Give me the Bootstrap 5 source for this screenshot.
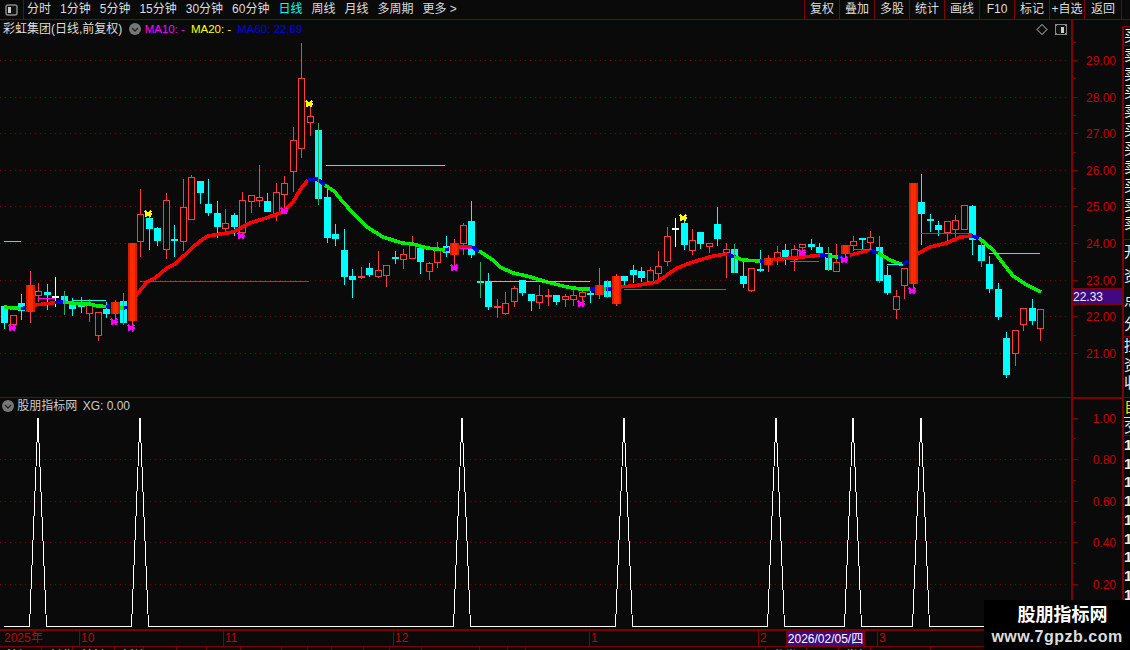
<!DOCTYPE html>
<html lang="zh-CN">
<head>
<meta charset="utf-8">
<title>彩虹集团 日线</title>
<link rel="stylesheet" href="https://cdn.jsdelivr.net/npm/bootstrap@5.3.0/dist/css/bootstrap.min.css">
<style>
html,body{height:100%;margin:0;background:#0a0a0a;overflow:hidden}
body{font-family:"Liberation Sans","Noto Sans CJK SC",sans-serif;font-size:12px;line-height:1;color:#ddd}
.term{width:1130px;height:650px;position:relative;background:#0a0a0a;overflow:hidden}
.tbar{height:20px;border-bottom:1px solid #800000;flex:none}
.tog-cell{width:24px;border-right:1px solid #800000}
.tog{display:block}
.tnav{gap:9px;padding-left:3px}
.tnav span{line-height:19px;white-space:nowrap}
.tnav .on{color:#00ffff}
.tbtn{width:35px;border-left:1px solid #800000;line-height:19px;text-align:center;white-space:nowrap}
.tbtn.last{width:38px;border-right:1px solid #800000}
.tpad{width:8px}
.mid{height:630px;flex:none}
.charts{width:1122px;flex:none}
.pan1{height:378px;flex:none;border-bottom:1px solid #800000}
.pan2{height:233px;flex:none;border-bottom:2px solid #800000}
.plot{display:block;shape-rendering:crispEdges}
.lg{position:absolute;left:3px;top:2px;line-height:14px;white-space:nowrap;color:#ddd}
.lg2{left:2px;top:1px;color:#ccc}
.lg svg{vertical-align:-2px}
.chev{margin-left:3px}
.xg{margin-left:2px}
.ma1{color:#ff00ff}.ma2{color:#ffff00}.ma3{color:#0000e6}
.ma{font-size:11.5px;margin-left:6px}
.dax{height:16px;flex:none;border-bottom:1px solid #800000}
.dcell{border-left:1px solid #800000;color:#c80000;padding-left:1px;line-height:15px;white-space:nowrap;flex:none}
.dcell.first{border-left:0;padding-left:4px}
.ddate{position:absolute;left:786px;top:0;width:79px;height:16px;background:#3f0a80;border:1px solid #800000;color:#fff;font-size:12px;line-height:14px;text-align:center;white-space:nowrap}
.tabs{height:3px;overflow:hidden;flex:none}
.tcell{border-right:1px solid #800000;flex:none;line-height:14px;padding:2px 0 0 7px;white-space:nowrap;overflow:hidden;color:#ddd}
.tcell.cy{color:#00ffff}
.strip{width:8px;flex:none;margin-top:6px;border-left:2px solid #800000;border-top:1px solid #800000;overflow:hidden;color:#eee;font-size:15px;line-height:18.7px}
.sec{border-bottom:1px solid #800000;overflow:hidden;white-space:nowrap}
.s1{height:19px}.s2{height:194px}.s3{height:97px}.s4{height:61px}.s5{height:20px;color:#e6e600;border-bottom:1px solid #ddd}.s6{height:18px;border-bottom:1px solid #800000}
.s3 div{line-height:24px}
.one{font-weight:700}
.wm{position:absolute;right:0;bottom:0;width:146px;height:50px;background:#000;color:#fff;font-weight:700;text-align:center}
.wm1{font-size:18px;line-height:18px;padding:4px 0 0 11px;font-family:"Noto Sans CJK SC",sans-serif}
.wm2{font-size:16px;line-height:16px;padding-top:7px;letter-spacing:.5px;color:#ddd}
</style>
</head>
<body>
<div class="term d-flex flex-column">
  <div class="tbar d-flex">
    <div class="tog-cell d-flex align-items-center justify-content-center">
      <svg class="tog" width="13" height="12" viewBox="0 0 13 12"><rect x="1" y="1" width="11" height="10" rx="2" fill="#111" stroke="#888" stroke-width="1.5"/><rect x="3" y="3" width="3" height="6" fill="#ccc"/></svg>
    </div>
    <div class="tnav d-flex flex-grow-1">
      <span>分时</span><span>1分钟</span><span>5分钟</span><span>15分钟</span><span>30分钟</span><span>60分钟</span><span class="on">日线</span><span>周线</span><span>月线</span><span>多周期</span><span>更多 &gt;</span>
    </div>
    <div class="d-flex">
      <div class="tbtn">复权</div><div class="tbtn">叠加</div><div class="tbtn">多股</div><div class="tbtn">统计</div><div class="tbtn">画线</div><div class="tbtn">F10</div><div class="tbtn">标记</div><div class="tbtn">+自选</div><div class="tbtn last">返回</div>
    </div>
    <div class="tpad"></div>
  </div>
  <div class="mid d-flex">
    <div class="charts d-flex flex-column">
      <div class="pan1 position-relative">
        <svg class="plot" id="main" width="1122" height="377" viewBox="0 20 1122 377"></svg>
        <div class="lg">彩虹集团(日线,前复权) <svg class="chev" width="12" height="12" viewBox="0 0 12 12"><circle cx="6" cy="6" r="6" fill="#777"/><path d="M3 5l3 3 3-3" fill="none" stroke="#222" stroke-width="1.3"/></svg><span class="ma ma1 ms-1">MA10: -</span><span class="ma ma2">MA20: -</span><span class="ma ma3">MA60: 22.69</span></div>
      </div>
      <div class="pan2 position-relative">
        <svg class="plot" id="sub" width="1122" height="231" viewBox="0 398 1122 231"></svg>
        <div class="lg lg2"><svg width="12" height="12" viewBox="0 0 12 12"><circle cx="6" cy="6" r="6" fill="#777"/><path d="M3 5l3 3 3-3" fill="none" stroke="#222" stroke-width="1.3"/></svg> 股朋指标网 <span class="xg">XG: 0.00</span></div>
      </div>
      <div class="dax d-flex position-relative" id="dax"><div class="ddate">2026/02/05/四</div></div>
      <div class="tabs d-flex" id="tabs"></div>
    </div>
    <div class="strip">
      <div class="sec s1">买</div>
      <div class="sec s2">卖<br>卖<br>买<br>卖<br>买<br>买<br>卖<br>买<br>卖<br>卖</div>
      <div class="sec s3"><div>开</div><div>资</div><div>点</div><div>分</div></div>
      <div class="sec s4">控<br>资<br>收</div>
      <div class="sec s5">自</div>
      <div class="sec s6">交</div>
      <div class="one">1<br>1<br>1<br>1<br>1<br>1<br>1<br>1<br>1<br>1<br>1<br>1</div>
    </div>
  </div>
  <div class="wm"><div class="wm1">股朋指标网</div><div class="wm2">www.7gpzb.com</div></div>
</div>
<script src="https://cdn.jsdelivr.net/npm/bootstrap@5.3.0/dist/js/bootstrap.bundle.min.js"></script>
<script>
var C=`c,306,306,323,329;r,315,315,324,328;c,294,303,311,320;f,271,285,312,323;r,283,291,295,301;c,284,292,295,310;w,277,296,296,307;g,291,296,301,315;c,298,305,309,316;c,297,303,307,313;r,299,305,313,321;r,312,312,335,340;c,302,309,314,318;f,300,302,314,325;g,293,301,323,325;f,243,243,321,332;r,189,214,241,256;c,214,218,229,250;c,227,228,241,246;r,193,200,249,258;e,225,239,239,257;r,179,207,241,250;r,175,177,219,219;c,181,181,193,204;c,179,204,213,216;c,201,213,227,238;r,209,223,228,230;c,213,215,227,236;r,192,200,232,234;r,195,195,201,212;r,165,197,200,206;c,193,201,212,212;r,183,192,214,220;r,176,183,194,213;r,127,140,171,191;r,43,78,148,157;r,107,116,122,135;g,123,130,199,205;c,187,197,238,243;c,224,234,239,246;c,229,250,277,285;c,269,276,280,298;d,267,276,276,279;c,263,268,275,277;r,251,270,276,277;r,265,265,275,286;e,251,257,257,264;r,249,254,259,268;r,236,245,258,258;c,248,248,262,274;r,262,263,271,279;r,242,250,262,267;c,236,246,253,257;f,239,243,255,270;r,223,225,243,254;c,201,221,255,258;h,262,281,281,298;c,273,281,307,310;d,299,306,306,318;r,292,303,313,314;r,286,288,301,306;c,280,280,293,296;c,294,294,301,311;r,285,295,302,308;d,289,295,295,306;c,295,295,302,305;r,294,296,299,306;r,290,295,299,305;r,288,292,296,304;e,288,293,293,303;f,268,285,295,299;g,280,281,297,298;f,274,276,304,306;c,276,276,281,286;c,265,270,275,283;c,267,271,278,282;r,267,270,281,281;r,251,266,273,280;r,227,236,261,265;w,218,228,228,247;c,215,223,245,250;r,229,240,250,254;c,232,232,244,249;r,243,243,246,252;c,207,224,239,246;r,243,249,252,277;g,244,249,273,273;c,260,276,284,288;r,268,268,290,291;e,250,269,269,272;f,255,258,265,272;r,246,252,259,264;c,244,250,259,265;r,245,249,259,270;r,244,244,247,255;c,239,244,247,250;c,243,247,253,256;g,247,253,270,271;r,244,262,271,271;f,245,245,254,260;r,236,241,245,250;e,238,238,238,250;r,231,237,242,250;g,236,247,281,283;c,266,275,293,295;r,290,296,309,318;r,268,268,285,298;f,183,183,284,288;c,174,202,214,245;e,214,219,219,232;c,221,225,230,236;r,221,221,232,241;r,215,220,229,238;r,205,205,229,229;c,205,206,240,255;g,243,245,261,267;c,256,264,289,293;c,283,289,317,320;c,332,338,375,378;r,330,330,353,365;r,308,308,324,330;c,299,308,321,325;r,309,309,328,340`.split(';').map(function(s){return s.split(',')});
var RED='#ff3c3c',CY='#00ffff',GR='#2fa866',PK='#ff3c70';
function X(i){return Math.round(4.3+8.49*i)}
function wick(x,a,b,c){return '<rect x="'+x+'" y="'+a+'" width="1" height="'+(b-a)+'" fill="'+c+'"/>'}
var back='',front='';
C.forEach(function(d,i){
  var t=d[0],w=+d[1],a=+d[2],b=+d[3],l=+d[4],x=X(i);
  if(t=='r'){back+=wick(x,w,l+1,RED)+'<rect x="'+(x-3)+'.5" y="'+a+'.5" width="6" height="'+(b-a)+'" fill="#0a0a0a" stroke="'+RED+'"/>'}
  else if(t=='c'){back+=wick(x,w,l,CY)+'<rect x="'+(x-3)+'" y="'+a+'" width="7" height="'+(b-a)+'" fill="'+CY+'"/>'}
  else if(t=='g'||t=='h'){back+=(t=='g'?'<rect x="'+(x-3)+'" y="'+a+'" width="7" height="'+(b-a)+'" fill="'+CY+'"/>':'<rect x="'+(x-3)+'" y="'+a+'" width="7" height="2" fill="'+CY+'"/>');front+=wick(x,w,l,GR)}
  else if(t=='f'){front+=wick(x,w,l,PK)+'<rect x="'+(x-4)+'" y="'+a+'" width="9" height="'+(b-a)+'" fill="#d42000"/><rect x="'+(x-2)+'" y="'+a+'" width="5" height="'+(b-a)+'" fill="#ff2a00"/>'}
  else{var c=t=='d'?RED:t=='e'?CY:'#fff';back+=wick(x,w,l,c)+'<rect x="'+(x-3)+'" y="'+a+'" width="7" height="2" fill="'+c+'"/>'}
});
var S={r:'#ff0000',g:'#00f000',b:'#0000e0'};
var L=[
['g','4,307 12,308 21,308.5'],['b','21,308.5 26,308'],['r','33,305 45,304 55,302.5'],['b','55,302.5 63,302'],['g','63,302 75,303.5 90,304 97,306 106,306.5'],['b','106,306.5 110,306'],['g','118,308 124,308'],['b','124,308 128,307'],
['r','135,297 147,282 155,278 167,268 175,264 192,248 200,241 208,236 233,232 250,223 263,219 283,212 293,202 300,190 308,180'],['b','308,180 317,179 325,185'],
['g','325,185 335,192 343,202 353,213 367,227 383,237 402,243 413,244 427,248 445,250'],['b','445,250 449,249'],['r','458,247 472,247'],['b','472,247 479,251'],
['g','479,251 493,260 500,267 513,273 527,276 547,282 567,287 580,289 590,289'],['b','590,289 595,289'],['g','603,289 606,289'],['b','606,289 611,289'],
['r','618,287 633,286 657,282 667,275 677,268 693,262 713,256 727,254'],['b','727,254 735,257'],['g','735,257 743,260 760,261'],['b','760,261 765,261'],['r','770,260 813,256 820,255'],['b','820,255 828,256'],['g','828,256 838,257'],['b','838,257 843,257'],['r','850,255 870,250'],['b','870,250 878,253'],['g','878,253 890,260 903,265'],['b','903,265 908,261'],
['r','917,254 930,247 947,243 960,237 972,236'],['b','972,236 979,238'],['g','979,238 993,250 1002,262 1013,276 1027,285 1041,292']
];
var lines=L.map(function(s){return '<polyline points="'+s[1]+'" fill="none" stroke="'+S[s[0]]+'" stroke-width="3.6"/>'}).join('');
var H=[[4,21,241,CY],[326,445,165,CY],[140,309,281,'#e000c0'],[487,590,281,CY],[624,726,289,'#ff00ff'],[73,106,300,CY],[38,55,298,'#ff00ff'],[921,972,233,'#e000c0'],[989,1040,253,CY],[887,903,264,CY],[790,819,261,'#ff00ff'],[853,872,249,'#ff00ff'],[460,472,248,'#ff00ff']];
var hl=H.map(function(h){return '<rect x="'+h[0]+'" y="'+h[2]+'" width="'+(h[1]-h[0])+'" height="1" fill="'+h[3]+'"/>'}).join('');
function mk(x,y,c){return '<path d="M'+(x-3)+' '+(y-3)+'L'+(x+3)+' '+(y+3)+'M'+(x+3)+' '+(y-3)+'L'+(x-3)+' '+(y+3)+'M'+(x-3)+' '+y+'H'+(x+4)+'" stroke="'+c+'" stroke-width="2.6" fill="none"/>'}
var M=[[12,328,0],[114,322,0],[131,328,0],[241,236,0],[284,211,0],[148,214,1],[309,104,1],[454,268,0],[581,304,0],[683,218,1],[802,253,0],[844,260,0],[912,291,0]];
var mks=M.map(function(m){return mk(m[0],m[1],m[2]?'#ffff00':'#ff00ff')}).join('');
function axis(list){
  var g='<rect x="1071" y="0" width="2" height="660" fill="#800000"/>';
  list.forEach(function(v){
    g+='<rect x="1073" y="'+v[0]+'" width="'+(v[1]?3:5)+'" height="1" fill="#800000"/>';
    if(v[2]){g+='<text x="1116" y="'+(v[0]+4.5)+'" text-anchor="end" font-size="12" fill="#c80000">'+v[2]+'</text>';}
    if(v[3])g+='<line x1="0" x2="1069" y1="'+(v[0]+.5)+'" y2="'+(v[0]+.5)+'" stroke="#800000" stroke-dasharray="1 4"/>';
  });
  return g;
}
var pa=[];
for(var p=29.5;p>=20.9;p-=.5){var y=Math.round(60+(29-p)*36.6),maj=Math.abs(p-Math.round(p))<.01;pa.push([y,!maj,maj?p.toFixed(2):'',maj])}
document.getElementById('main').innerHTML=axis(pa)+back+lines+front+hl+mks
 +'<rect x="1072" y="288" width="49" height="16" fill="#3f0a80" stroke="#800000"/><text x="1073" y="300.5" font-size="12" fill="#f0e8ff">22.33</text>'
 +'<path d="M1042 24.5l5 5-5 5-5-5z" fill="none" stroke="#666"/><rect x="1055.5" y="24.5" width="11" height="10" rx="2" fill="#111" stroke="#888" stroke-width="1.4"/><rect x="1061" y="26.5" width="3" height="6" fill="#ccc"/>';
var sa=[[418,0,'1.00',0],[438,1,'',0],[459,0,'0.80',1],[480,1,'',0],[501,0,'0.60',1],[522,1,'',0],[542,0,'0.40',1],[563,1,'',0],[584,0,'0.20',1],[605,1,'',0]];
var pk=[38,140,462,624,776,853,921],pts='4,626.5';
pk.forEach(function(x){pts+=' '+(x-8.5)+',626.5 '+x+',418 '+(x+8.5)+',626.5'});pts+=' 1071,626.5';
document.getElementById('sub').innerHTML=axis(sa)+'<rect x="1071" y="398" width="51" height="1" fill="#800000"/><polyline points="'+pts+'" fill="none" stroke="#fff" stroke-width="1"/>';
var D=[['2025年',79,1],['10',144],['11',170],['12',196],['1',169],['2',119],['3',194]];
var dx=document.getElementById('dax'),mark=dx.firstChild;
D.forEach(function(d){var e=document.createElement('div');e.className='dcell'+(d[2]?' first':'');e.style.width=d[1]+'px';e.textContent=d[0];dx.insertBefore(e,mark)});
var T=[['沪深',42],['创业',31],['科创',42],['板块',29],['',33],['',30],['',34],['',41],['',26],['',24],['',32],['',26],['',32],['',58],['',28],['',18],['',240],['分类',41],['',32],['指标',32,1],['',60]];
var tb=document.getElementById('tabs');
T.forEach(function(t){var e=document.createElement('div');e.className='tcell'+(t[2]?' cy':'');e.style.width=t[1]+'px';e.textContent=t[0];tb.appendChild(e)});
</script>
</body>
</html>
